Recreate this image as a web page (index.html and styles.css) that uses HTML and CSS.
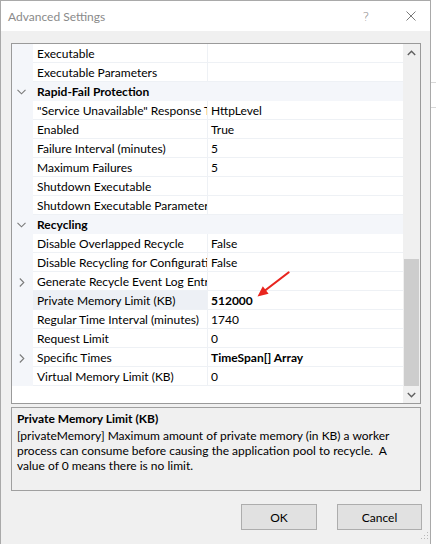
FILE: index.html
```html
<!DOCTYPE html>
<html>
<head>
<meta charset="utf-8">
<link rel="stylesheet" href="styles.css">
</head>
<body>
<div class="screen">
  <div class="window">
    <div class="titlebar">
      <span class="title">Advanced Settings</span>
      <span class="help">?</span>
      <svg class="close" width="10" height="10" viewBox="0 0 10 10"><path d="M0.5 0.5 L9.5 9.5 M9.5 0.5 L0.5 9.5" stroke="#7a7a7a" stroke-width="1" fill="none"/></svg>
    </div>
    <div class="content">
      <div class="grid">
        <div class="rows">
          <div class="row"><div class="gut"></div><div class="name">Executable</div><div class="val"></div></div>
          <div class="row"><div class="gut"></div><div class="name">Executable Parameters</div><div class="val"></div></div>
          <div class="row cat"><div class="gut"><svg width="9" height="6" viewBox="0 0 9 6"><polyline points="0.5,0.8 4.5,4.8 8.5,0.8" stroke="#7a7a7a" stroke-width="1.1" fill="none"/></svg></div><div class="name">Rapid-Fail Protection</div></div>
          <div class="row"><div class="gut"></div><div class="name">"Service Unavailable" Response Type</div><div class="val">HttpLevel</div></div>
          <div class="row"><div class="gut"></div><div class="name">Enabled</div><div class="val">True</div></div>
          <div class="row"><div class="gut"></div><div class="name">Failure Interval (minutes)</div><div class="val">5</div></div>
          <div class="row"><div class="gut"></div><div class="name">Maximum Failures</div><div class="val">5</div></div>
          <div class="row"><div class="gut"></div><div class="name">Shutdown Executable</div><div class="val"></div></div>
          <div class="row"><div class="gut"></div><div class="name">Shutdown Executable Parameters</div><div class="val"></div></div>
          <div class="row cat"><div class="gut"><svg width="9" height="6" viewBox="0 0 9 6"><polyline points="0.5,0.8 4.5,4.8 8.5,0.8" stroke="#7a7a7a" stroke-width="1.1" fill="none"/></svg></div><div class="name">Recycling</div></div>
          <div class="row"><div class="gut"></div><div class="name">Disable Overlapped Recycle</div><div class="val">False</div></div>
          <div class="row"><div class="gut"></div><div class="name">Disable Recycling for Configuration Changes</div><div class="val">False</div></div>
          <div class="row"><div class="gut"><svg class="exp" width="6" height="9" viewBox="0 0 6 9"><polyline points="0.8,0.5 4.8,4.5 0.8,8.5" stroke="#7a7a7a" stroke-width="1.1" fill="none"/></svg></div><div class="name">Generate Recycle Event Log Entry</div><div class="val"></div></div>
          <div class="row sel"><div class="gut"></div><div class="name">Private Memory Limit (KB)</div><div class="val b">512000</div></div>
          <div class="row"><div class="gut"></div><div class="name">Regular Time Interval (minutes)</div><div class="val">1740</div></div>
          <div class="row"><div class="gut"></div><div class="name">Request Limit</div><div class="val">0</div></div>
          <div class="row"><div class="gut"><svg class="exp" width="6" height="9" viewBox="0 0 6 9"><polyline points="0.8,0.5 4.8,4.5 0.8,8.5" stroke="#7a7a7a" stroke-width="1.1" fill="none"/></svg></div><div class="name">Specific Times</div><div class="val b">TimeSpan[] Array</div></div>
          <div class="row"><div class="gut"></div><div class="name">Virtual Memory Limit (KB)</div><div class="val">0</div></div>
          <div class="filler"></div>
        </div>
        <div class="scrollbar">
          <div class="sb-btn"><svg width="9" height="6" viewBox="0 0 9 6"><polyline points="0.8,5 4.5,1.3 8.2,5" stroke="#606060" stroke-width="1.4" fill="none"/></svg></div>
          <div class="track"><div class="thumb"></div></div>
          <div class="sb-btn"><svg width="9" height="6" viewBox="0 0 9 6"><polyline points="0.8,1 4.5,4.7 8.2,1" stroke="#606060" stroke-width="1.4" fill="none"/></svg></div>
        </div>
        <svg class="arrow" width="34" height="27" viewBox="256 271 34 27">
          <line x1="288.5" y1="272.5" x2="265" y2="290.5" stroke="#e8251f" stroke-width="2.2" stroke-linecap="round"/>
          <polygon points="257.5,296.5 262.8,286.2 268.6,293.8" fill="#e8251f"/>
        </svg>
      </div>
      <div class="desc">
        <div class="desc-title">Private Memory Limit (KB)</div>
        <div class="desc-text">[privateMemory] Maximum amount of private memory (in KB) a worker<br>process can consume before causing the application pool to recycle.&nbsp; A<br>value of 0 means there is no limit.</div>
      </div>
      <div class="buttons">
        <button class="btn ok">OK</button>
        <button class="btn cancel">Cancel</button>
      </div>
    </div>
    <svg class="grip" width="10" height="10" viewBox="0 0 10 10">
      <rect x="8" y="0" width="1" height="1" fill="#b8b8b8"/>
      <rect x="5" y="3" width="1" height="1" fill="#b8b8b8"/>
      <rect x="8" y="3" width="1" height="1" fill="#b8b8b8"/>
      <rect x="2" y="6" width="1" height="1" fill="#b8b8b8"/>
      <rect x="5" y="6" width="1" height="1" fill="#b8b8b8"/>
      <rect x="8" y="6" width="1" height="1" fill="#b8b8b8"/>
    </svg>
  </div>
  <div class="outside">
    <div class="o-line o1"></div>
    <div class="o-line o2"></div>
  </div>
</div>
</body>
</html>
```
FILE: styles.css
```css
* { box-sizing: border-box; }
html, body { margin: 0; padding: 0; }
body {
  width: 436px;
  height: 544px;
  overflow: hidden;
  background: #ffffff;
  font-family: Lato, "Noto Sans", sans-serif;
  font-size: 12px;
  color: #000;
}
.screen { display: flex; height: 544px; }
.window {
  position: relative;
  width: 431px;
  height: 544px;
  flex: none;
  border: 1px solid #a9a9a9;
  border-bottom: none;
  background: #f0f0f0;
  display: flex;
  flex-direction: column;
}
.titlebar {
  height: 30px;
  flex: none;
  background: #fff;
  display: flex;
  align-items: center;
  padding-left: 7px;
}
.title { flex: 1; color: #8a8a8a; font-size: 12px; }
.help {
  width: 14px;
  margin-right: 33px;
  text-align: center;
  color: #8a8a8a;
  font-family: "DejaVu Sans", sans-serif;
  font-weight: 300;
  font-size: 13px;
}
.close { margin-right: 14px; }
.content {
  flex: 1;
  display: flex;
  flex-direction: column;
  padding: 12px 9px 0 10px;
}
.grid {
  position: relative;
  height: 361px;
  flex: none;
  border: 1px solid #9a9a9a;
  background: #fff;
  display: flex;
}
.rows { width: 391px; display: flex; flex-direction: column; }
.row { display: flex; height: 19px; flex: none; }
.gut {
  width: 21px;
  flex: none;
  background: #f4f6fa;
  display: flex;
  align-items: center;
  padding-left: 5px;
  padding-top: 1px;
}
.gut .exp { margin-left: 2px; }
.name, .val {
  height: 19px;
  line-height: 18px;
  padding-top: 1px;
  border-bottom: 1px solid #eef1f5;
  white-space: nowrap;
  overflow: hidden;
}
.name { width: 175px; flex: none; padding-left: 4px; border-right: 1px solid #eef1f5; }
.val { width: 195px; flex: none; padding-left: 3px; }
.b { font-weight: bold; }
.cat .name {
  width: 370px;
  background: #f4f6fa;
  font-weight: bold;
  border-right: none;
  border-bottom-color: #f4f6fa;
}
.sel .name { background: #edf0f5; }
.filler { flex: 1; background: #fff; }
.scrollbar {
  width: 17px;
  flex: none;
  background: #f0f0f0;
  display: flex;
  flex-direction: column;
}
.sb-btn { height: 17px; flex: none; display: flex; align-items: center; justify-content: center; }
.track { flex: 1; display: flex; flex-direction: column; padding: 198px 1px 0 1px; }
.thumb { flex: 1; background: #cdcdcd; }
.arrow { position: absolute; left: 244px; top: 227px; }
.desc {
  margin-top: 3px;
  height: 84px;
  flex: none;
  border: 1px solid #a0a0a0;
  background: #f0f0f0;
  padding: 3px 5px 0 5px;
  line-height: 15px;
  white-space: nowrap;
  overflow: hidden;
}
.desc-title { font-weight: bold; margin-bottom: 2px; }
.buttons {
  margin-top: 13px;
  margin-right: -1px;
  display: flex;
  justify-content: flex-end;
  gap: 20px;
}
.btn {
  height: 26px;
  background: #e1e1e1;
  border: 1px solid #adadad;
  border-radius: 0;
  font-family: Lato, "Noto Sans", sans-serif;
  font-size: 12px;
  color: #000;
  padding: 0;
}
.ok { width: 76px; }
.cancel { width: 85px; }
.grip { position: absolute; right: 1px; bottom: 2px; }
.outside { flex: 1; position: relative; background: #fff; }
.o-line { height: 1px; background: #d8d8d8; margin-top: 0; }
.o1 { margin-top: 82px; }
.o2 { margin-top: 24px; }
```
